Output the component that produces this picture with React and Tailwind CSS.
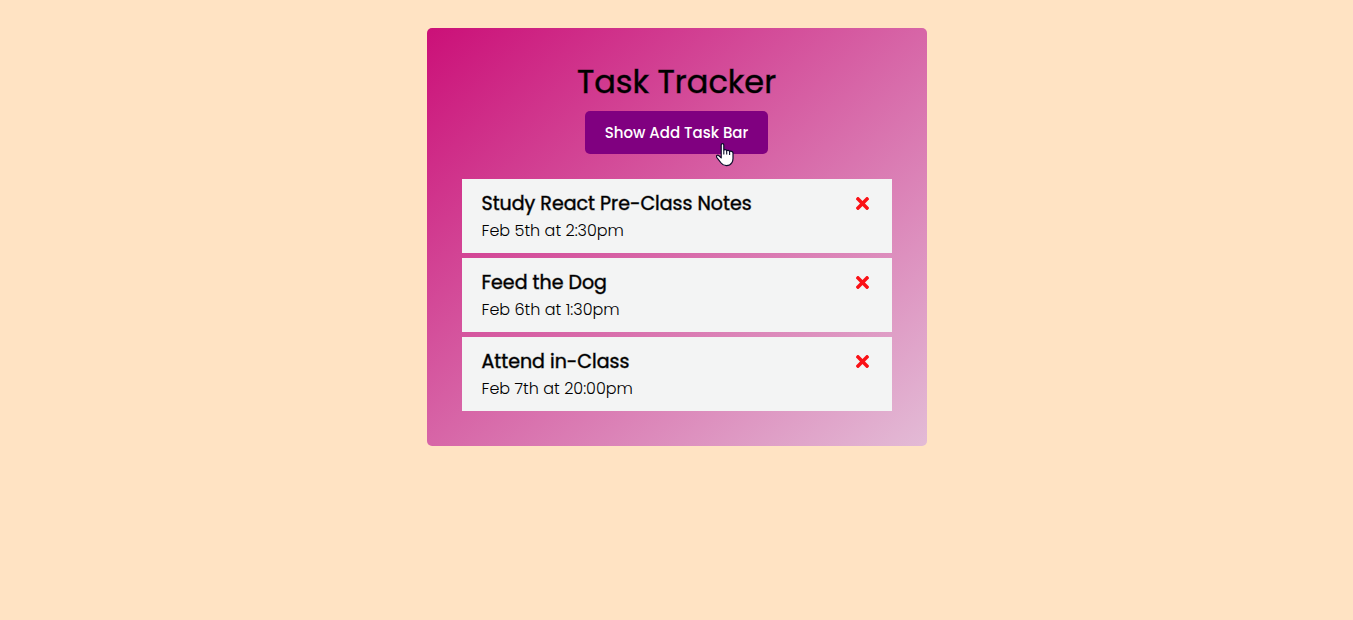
import { FaTimes } from "react-icons/fa";

const tasks = [
  { id: 1, text: "Study React Pre-Class Notes", day: "Feb 5th at 2:30pm" },
  { id: 2, text: "Feed the Dog", day: "Feb 6th at 1:30pm" },
  { id: 3, text: "Attend in-Class", day: "Feb 7th at 20:00pm" },
];

function Pointer() {
  return (
    <svg
      className="pointer-events-none absolute top-8 right-8 h-6 w-5"
      viewBox="0 0 20 24"
      aria-hidden="true"
    >
      <path
        d="M5.2 1.9C5.2.3 7.8.3 7.8 1.9v5.3c.5-1 2.8-.8 2.9.6.5-.8 2.8-.6 2.9.8.8-.8 3.4-.3 3.4 1.4v5.6c0 1.7-.4 3-1.2 4.2-1.2 1.9-2.8 2.9-5.4 2.9-2.3 0-4-.9-5.3-2.7L.9 14.6c-1.2-2 .6-3.2 2-1.9l2.3 2.2z"
        fill="#fff"
        stroke="#0b0b2a"
        strokeWidth="1.2"
        strokeLinejoin="round"
      />
      <path d="M7.8 7.2v4.3M10.7 7.8v3.7M13.6 8.6V12" stroke="#0b0b2a" strokeWidth="1.1" fill="none" />
    </svg>
  );
}

function Task({ task }) {
  return (
    <li className="bg-[#f3f4f4] px-5 pt-2.5 pb-2">
      <div className="flex items-center justify-between">
        <h2 className="pt-0.5 text-[19px] leading-[26px] font-normal [-webkit-text-stroke:1px_#00000070]">
          {task.text}
        </h2>
        <button type="button" aria-label={`Delete ${task.text}`} className="cursor-pointer text-[#fa1116]">
          <FaTimes size={19} />
        </button>
      </div>
      <p className="text-[16px] leading-7 font-light">{task.day}</p>
    </li>
  );
}

export default function App() {
  return (
    <div className="min-h-screen bg-[#ffe3c3] px-4 py-7 font-[Poppins,Inter,sans-serif] text-black">
      <main className="mx-auto max-w-[500px] rounded-[5px] bg-linear-[to_bottom_right,#cb1078,#e3bbd6] p-[35px]">
        <header className="mb-[25px] flex flex-col items-center gap-2.5">
          <h1 className="text-[32px] leading-[38px] font-normal [-webkit-text-stroke:1px_#00000070]">
            Task Tracker
          </h1>
          <div className="relative">
            <button
              type="button"
              className="block h-[43px] cursor-pointer rounded-[5px] bg-[#800080] px-5 pt-0.5 text-[15px] font-medium text-white"
            >
              Show Add Task Bar
            </button>
            <Pointer />
          </div>
        </header>
        <ul className="flex flex-col gap-[5px]">
          {tasks.map((task) => (
            <Task key={task.id} task={task} />
          ))}
        </ul>
      </main>
    </div>
  );
}
